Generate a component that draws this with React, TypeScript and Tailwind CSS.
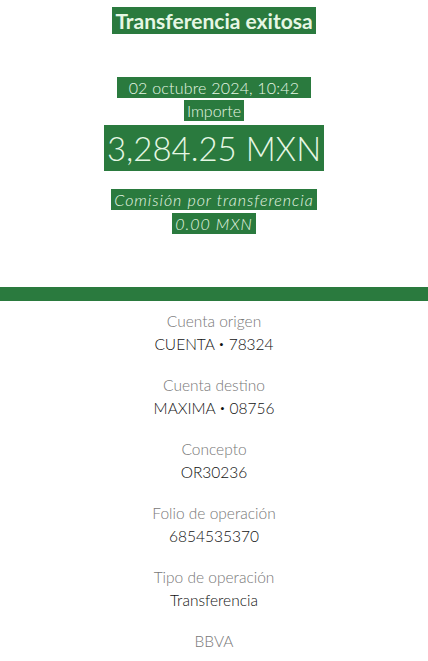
import React from 'react';

const detalles = [
  { label: 'Cuenta origen', value: 'CUENTA', num: '78324' },
  { label: 'Cuenta destino', value: 'MAXIMA', num: '08756' },
  { label: 'Concepto', value: 'OR30236' },
  { label: 'Folio de operación', value: '6854535370' },
  { label: 'Tipo de operación', value: 'Transferencia' },
];

const Mark: React.FC<{ children: React.ReactNode; className?: string }> = ({ children, className }) => (
  <span className={`bg-[#2a7a3e] text-[#e6f7e4] px-[3px] py-[1px] ${className ?? ''}`}>{children}</span>
);

const App: React.FC = () => {
  return (
    <div className="w-[428px] h-[661px] overflow-hidden bg-white font-['Lato','Liberation_Sans',sans-serif] flex flex-col items-center">
      <div className="pt-[9px] text-[21px] font-bold leading-[24px]">
        <Mark>Transferencia exitosa</Mark>
      </div>

      <div className="mt-[46px] flex flex-col items-center font-light">
        <div className="text-[16px] leading-[18px] tracking-[0.2px]"><Mark className="px-[12px]">02 octubre 2024, 10:42</Mark></div>
        <div className="mt-[5px] text-[16px] leading-[18px]"><Mark>Importe</Mark></div>
        <div className="mt-[8px] text-[33px] leading-[40px]"><Mark className="py-[3px]">3,284.25 MXN</Mark></div>
        <div className="mt-[22px] text-[16px] leading-[20px] italic tracking-[1px]"><Mark>Comisión por transferencia</Mark></div>
        <div className="mt-[4px] text-[16px] leading-[20px] italic tracking-[1px]"><Mark>0.00 MXN</Mark></div>
      </div>

      <div className="mt-[53px] w-full h-[14px] shrink-0 bg-[#2a7a3e]" />

      <div className="mt-[10px] flex flex-col items-center gap-[21px]">
        {detalles.map(d => (
          <div key={d.label} className="flex flex-col items-center">
            <div className="text-[15.5px] leading-[20px] font-light text-[#777777]">{d.label}</div>
            <div className="mt-[3px] text-[15.5px] leading-[20px] font-light text-[#111111]">
              {d.value}
              {d.num && (
                <>
                  {' '}<span className="text-[10px] align-[2px]">•</span>{' '}{d.num}
                </>
              )}
            </div>
          </div>
        ))}
        <div className="text-[15.5px] leading-[20px] font-light text-[#777777]">BBVA</div>
      </div>
    </div>
  );
};

export default App;
